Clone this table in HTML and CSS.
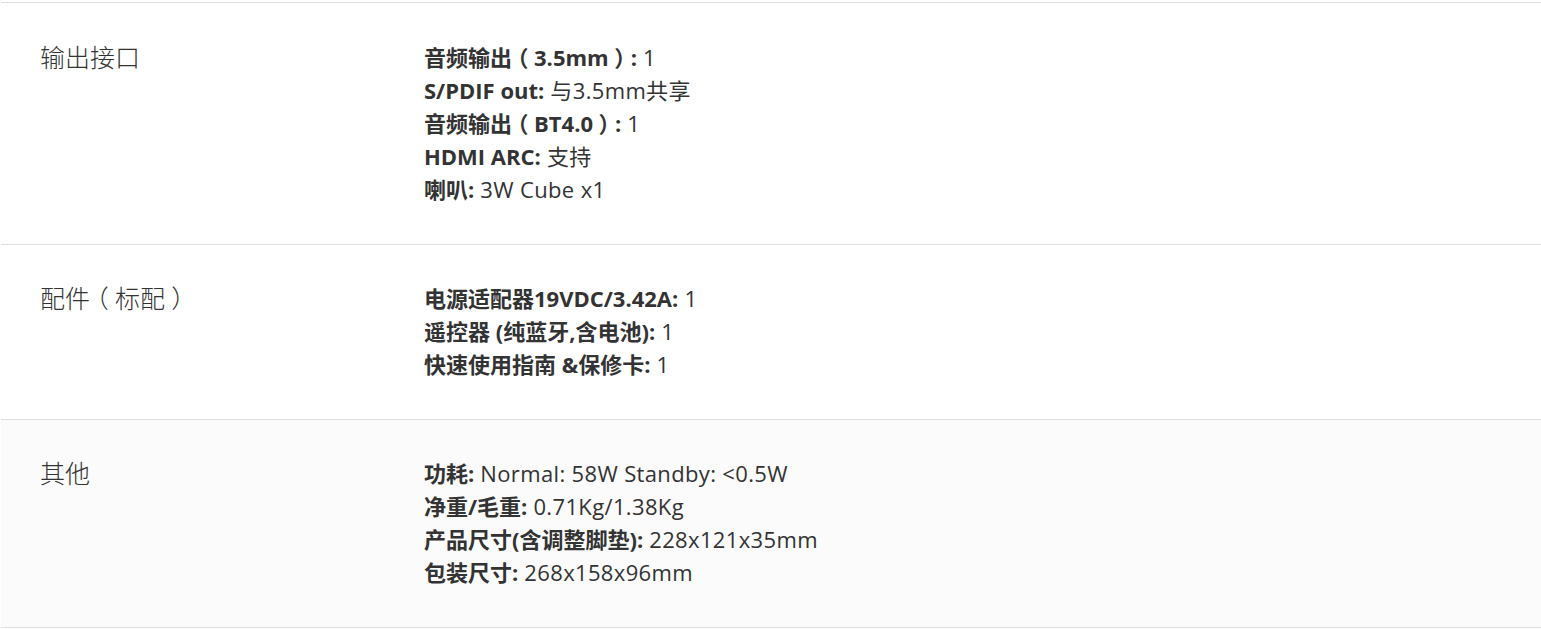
FILE: index.html
```html
<!DOCTYPE html>
<html>
    <head>
        <meta name="viewport" content="width=device-width, initial-scale=1.0">
        <link rel="stylesheet" href="styles.css">
    </head>
    <body>
        <div class="specs">
            <div class="spec-row">
                <div class="spec-name">输出接口</div>
                <div class="spec-value">
                    <p><b>音频输出<span class="fp">（</span>3.5mm<span class="fp">）</span>:</b> 1</p>
                    <p><b>S/PDIF out:</b> 与3.5mm共享</p>
                    <p><b>音频输出<span class="fp">（</span>BT4.0<span class="fp">）</span>:</b> 1</p>
                    <p><b>HDMI ARC:</b> 支持</p>
                    <p><b>喇叭:</b> 3W Cube x1</p>
                </div>
            </div>
            <div class="spec-row">
                <div class="spec-name">配件<span class="fp">（</span>标配<span class="fp">）</span></div>
                <div class="spec-value">
                    <p><b>电源适配器19VDC/3.42A:</b> 1</p>
                    <p><b>遥控器 (纯蓝牙,含电池):</b> 1</p>
                    <p><b>快速使用指南 &amp;保修卡:</b> 1</p>
                </div>
            </div>
            <div class="spec-row alt">
                <div class="spec-name">其他</div>
                <div class="spec-value">
                    <p><b>功耗:</b> Normal: 58W Standby: &lt;0.5W</p>
                    <p><b>净重/毛重:</b> 0.71Kg/1.38Kg</p>
                    <p><b>产品尺寸(含调整脚垫):</b> 228x121x35mm</p>
                    <p><b>包装尺寸:</b> 268x158x96mm</p>
                </div>
            </div>
        </div>
    </body>
</html>
```

FILE: styles.css
```css
html, body {
    margin: 0;
    padding: 0;
    background: #fff;
}
body {
    font-family: "Open Sans", "Noto Sans CJK SC", sans-serif;
    color: #333;
}
.specs {
    margin: 2px 0 0 1px;
    border-top: 1px solid #dfdfdf;
}
.spec-row {
    display: grid;
    grid-template-columns: 423px 1fr;
    padding: 37px 0 38px 0;
    border-bottom: 1px solid #dfdfdf;
}
.spec-row:first-child {
    padding-top: 38px;
}
.spec-row.alt {
    background: #fbfbfb;
}
.spec-name {
    padding-left: 39px;
    font-size: 25px;
    font-weight: 300;
    line-height: 33px;
    color: #333;
}
/* full-width brackets, glyph centred in its cell */
.fp {
    font-family: "Noto Sans CJK SC", sans-serif;
    font-feature-settings: "halt";
    line-height: 1;
    margin: 0 0.25em;
}
.spec-value {
    font-size: 22px;
    line-height: 33px;
}
.spec-value p {
    margin: 0;
    letter-spacing: 0.35px;
}
.spec-value b {
    font-weight: 700;
    letter-spacing: 0;
}
```
